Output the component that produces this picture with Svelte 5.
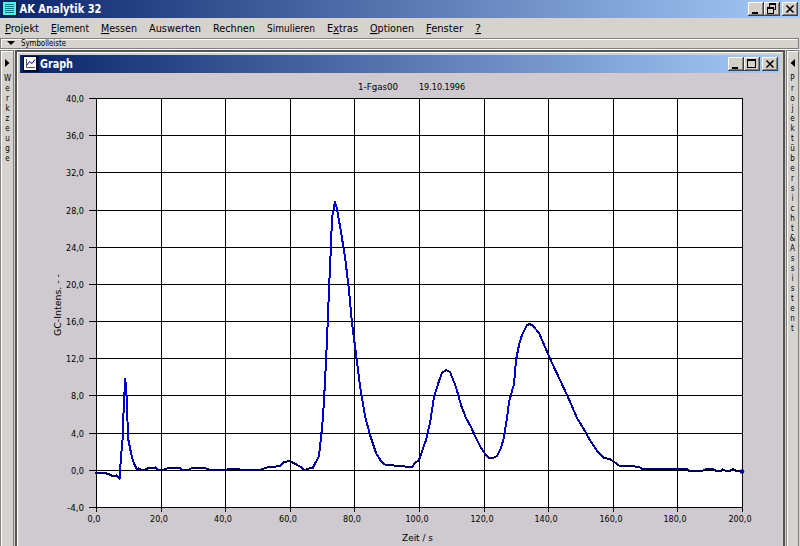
<script>
const menu = [
	["", "P", "rojekt", 34],
	["", "E", "lement", 38],
	["", "M", "essen", 36],
	["Auswerten", "", "", 52],
	["Rechnen", "", "", 42],
	["Simulieren", "", "", 48],
	["E", "x", "tras", 31],
	["", "O", "ptionen", 44],
	["", "F", "enster", 37],
	["", "?", "", 6],
];

const leftLetters = [..."Werkzeuge"];
const rightLetters = [..."Projektübersicht&Assistent"];

const xTicks = [96, 161, 225, 290, 354, 419, 484, 548, 613, 677, 742];
const yTicks = [98, 135, 172, 210, 247, 284, 321, 358, 395, 433, 470, 507];

const format = (n) => `${n},0`;

const trace = [
	[96, 473], [104, 473], [109, 474], [112, 476], [116, 475.5], [119.5, 478.5],
	[121, 457], [122.5, 440], [124, 400], [125.3, 379], [127, 403], [128, 438], [131, 453], [133, 461],
	[137, 470], [139, 468.5], [142, 470], [145, 470], [148, 468], [155, 467.5],
	[158, 470], [163, 470], [168, 468], [180, 468], [182, 470], [188, 470],
	[192, 468], [205, 468], [210, 470], [225, 470], [229, 469], [238, 469],
	[241, 470], [260, 470], [267, 467.5], [280, 466], [284, 462], [290, 461],
	[300, 466.5], [304, 470], [313, 467.5], [319, 456], [322, 428], [323, 417],
	[325, 382], [327, 340], [329, 290], [331, 245], [332, 218], [335, 202],
	[337, 209], [341, 232], [345, 257], [349, 290], [352, 323], [356, 354],
	[360, 386], [365, 416], [370, 435], [376, 453], [381, 461], [385, 464.5],
	[398, 466], [412, 467], [415, 463], [419, 460], [426, 440], [430, 423],
	[434, 397], [439, 381], [442, 373], [446, 370], [450, 372], [456, 387],
	[461, 405], [466, 418], [471, 427], [476, 438], [481, 448], [486, 455],
	[489, 458], [493, 458], [497, 456], [501, 448], [504, 437], [507, 418],
	[509, 402], [514, 384], [516, 360], [519, 345], [522, 335], [527, 325],
	[530, 324], [533, 326], [539, 333], [545, 347], [552, 363], [560, 380],
	[567, 395], [571, 404], [577, 418], [582, 426], [591, 442], [598, 452],
	[604, 458], [610, 459], [619, 465.5], [633, 466], [640, 467.5], [642, 469],
	[687, 469], [689, 471], [702, 471], [706, 469], [713, 469], [716, 471],
	[721, 471], [723, 469.5], [726, 471], [730, 471], [733, 469], [736, 471],
	[742, 471.5],
];

// steep parts of the trace are drawn brighter than flat ones
const segments = trace.slice(1).map(([x, y], i) => {
	const [px, py] = trace[i];
	const slope = Math.abs((y - py) / (x - px));
	return { d: `M${px} ${py}L${x} ${y}`, color: slope > 3 ? "#0000c8" : slope > 0.8 ? "#000098" : "#000058" };
});
</script>

{#snippet controls(middle)}
	<div class="controls">
		<button aria-label="Minimieren">
			<svg width="16" height="14"><path d="M4 10h6v2H4z" /></svg>
		</button>
		<button aria-label={middle}>
			<svg width="16" height="14" fill-rule="evenodd">
				{#if middle === "restore"}
					<path d="M5 1h7v7h-2v4H3V5h2zM6 3v2h4v2h1V3zM4 7v4h5V7z" />
				{:else}
					<path d="M3 2h9v9H3zM4 4v6h7V4z" />
				{/if}
			</svg>
		</button>
		<button class="close" aria-label="Schließen">
			<svg width="16" height="14"><path d="M4.500 3.500l7 7M11.500 3.500l-7 7" stroke="#000" stroke-width="1.600" /></svg>
		</button>
	</div>
{/snippet}

<div class="app">
	<header class="titlebar main-title">
		<svg class="logo" width="16" height="16">
			<path d="M0 0h16v16H0z" fill="#062437" />
			<path d="M1 1h13v13H1z" fill="#5ee" />
			<path d="M3 3.500h9M3 5.500h9M3 7.500h9M3 9.500h9M3 11.500h9" stroke="#087b80" />
		</svg>
		<svg class="caption" width="90" height="18"><text x="0.500" y="13" textLength="82" lengthAdjust="spacingAndGlyphs">AK Analytik 32</text></svg>
		{@render controls("restore")}
	</header>

	<nav class="menu">
		{#each menu as [before, key, after, width]}
			<svg {width} height="19">
				<text x="0" y="14" textLength={width} lengthAdjust="spacingAndGlyphs">{before}<tspan class="key">{key}</tspan>{after}</text>
			</svg>
		{/each}
	</nav>

	<div class="toolbar">
		<svg width="60" height="9">
			<path d="M0 2h8L4 6z" />
			<text x="14" y="7" textLength="45" lengthAdjust="spacingAndGlyphs">Symbolleiste</text>
		</svg>
	</div>

	<div class="workspace">
		<aside class="left">
			<svg class="arrow" width="5" height="8"><path d="M0 0v8l4.500-4z" /></svg>
			{#each leftLetters as letter}<span>{letter}</span>{/each}
		</aside>

		<main>
			<section class="window">
				<div class="titlebar">
					<svg class="logo" width="16" height="16">
						<path d="M0 0h16v16H0z" fill="#000a30" />
						<path d="M1 1h12v13H1z" fill="#fff" />
						<path d="M3.500 3v8.500H12" fill="none" stroke="#555" />
						<path d="M4 9l2.500-3.500 2.500 2 3-4" fill="none" stroke="#0000a0" />
					</svg>
					<svg class="caption" width="60" height="18"><text x="0" y="13" textLength="33" lengthAdjust="spacingAndGlyphs">Graph</text></svg>
					{@render controls("maximize")}
				</div>

				<svg class="chart" width="760" height="473" viewBox="20 73 760 473">
					<rect x="96" y="98" width="647" height="410" fill="#fff" />
					<g class="grid" fill="#000">
						{#each xTicks as x}<rect {x} y="98" width="1" height="414" />{/each}
						{#each yTicks as y}<rect x="89" {y} width="654" height="1" />{/each}
					</g>
					<g class="labels">
						{#each yTicks as y, i}
							{@const label = format(40 - i * 4)}
							<text x={84} y={y + 4} text-anchor="end" textLength={label.length === 3 ? 13 : i === 11 ? 17 : 18} lengthAdjust="spacingAndGlyphs">{label}</text>
						{/each}
						{#each xTicks as x, i}
							{@const label = format(i * 20)}
							<text x={x - 2} y="522" text-anchor="middle" textLength={label.length === 3 ? 13 : label.length === 4 ? 18 : 23} lengthAdjust="spacingAndGlyphs">{label}</text>
						{/each}
						<text x="358" y="90" textLength="40" lengthAdjust="spacingAndGlyphs">1-Fgas00</text>
						<text x="419" y="90" textLength="46" lengthAdjust="spacingAndGlyphs">19.10.1996</text>
						<text x="402" y="541" textLength="31" lengthAdjust="spacingAndGlyphs">Zeit / s</text>
						<text transform="translate(61 336) rotate(-90)" textLength="62" lengthAdjust="spacingAndGlyphs">GC-Intens. - -</text>
					</g>
					<g class="trace">
						{#each segments as { d, color }}<path {d} stroke={color} />{/each}
					</g>
					<circle cx="742" cy="471.500" r="2.300" fill="#0000a0" />
				</svg>
			</section>
		</main>

		<aside class="right">
			<svg class="arrow" width="5" height="8"><path d="M5 0v8L.5 4z" /></svg>
			{#each rightLetters as letter}<span>{letter}</span>{/each}
		</aside>
	</div>
</div>

<style>
	:global(body) {
		margin: 0;
		overflow: hidden;
	}

	.app {
		width: 800px;
		height: 546px;
		display: flex;
		flex-direction: column;
		overflow: hidden;
		background: #d6d2ce;
		font-family: "DejaVu Sans Condensed", "DejaVu Sans", sans-serif;
		color: #000;
	}

	svg {
		display: block;
		flex: none;
		overflow: visible;
	}

	.titlebar {
		display: flex;
		align-items: center;
		height: 18px;
		box-sizing: border-box;
		padding: 0 2px 0 3px;
		background: linear-gradient(90deg, #0a246a, #a6caf8);
	}

	.main-title {
		flex: none;
		padding: 0 2px;
	}

	.logo {
		margin-right: 1px;
	}

	.caption {
		font-size: 11.500px;
		font-weight: bold;
		fill: #fff;
	}

	.controls {
		display: flex;
		margin-left: auto;
	}

	button {
		width: 16px;
		height: 14px;
		padding: 0;
		border: 0;
		background: #d4d0c8;
		box-shadow: inset -1px -1px #404040, inset 1px 1px #fff, inset -2px -2px #808080;
	}

	.close {
		margin-left: 2px;
	}

	.menu {
		flex: none;
		display: flex;
		gap: 12px;
		height: 20px;
		padding-left: 5px;
		font-size: 11px;
	}

	.key {
		text-decoration: underline;
	}

	.toolbar {
		flex: none;
		box-sizing: border-box;
		height: 11px;
		width: 799px;
		padding-left: 6px;
		border: 1px solid #808080;
		box-shadow: inset 1px 1px #fff;
		font-size: 8px;
	}

	.workspace {
		flex: 1;
		display: flex;
		min-height: 0;
		border-top: 1px solid #fff;
	}

	aside {
		flex: none;
		display: flex;
		flex-direction: column;
		align-items: center;
		box-sizing: border-box;
		width: 14px;
		border: 1px solid #808080;
		border-bottom: 0;
		box-shadow: inset 1px 1px #fff;
		font-size: 8px;
		line-height: 10px;
	}

	aside span {
		height: 10px;
	}

	.left span {
		padding-left: 1px;
	}

	.arrow {
		margin: 8px 0 7px;
	}

	.right {
		width: 13px;
	}

	main {
		flex: none;
		box-sizing: border-box;
		width: 770px;
		margin: 0 1px;
		border: 2px solid #555;
		border-bottom: 0;
	}

	.window {
		box-sizing: border-box;
		height: 496px;
		padding: 2px 2px 0;
		border: 1px solid #fff;
		border-right-color: #d4d0c8;
		background: #d4d0c8;
	}

	.chart {
		background: #cfcacf;
	}

	.grid,
	.trace {
		shape-rendering: crispEdges;
	}

	.trace {
		fill: none;
		stroke-width: 2;
		stroke-linecap: square;
	}

	.labels {
		font-size: 9.500px;
	}
</style>
